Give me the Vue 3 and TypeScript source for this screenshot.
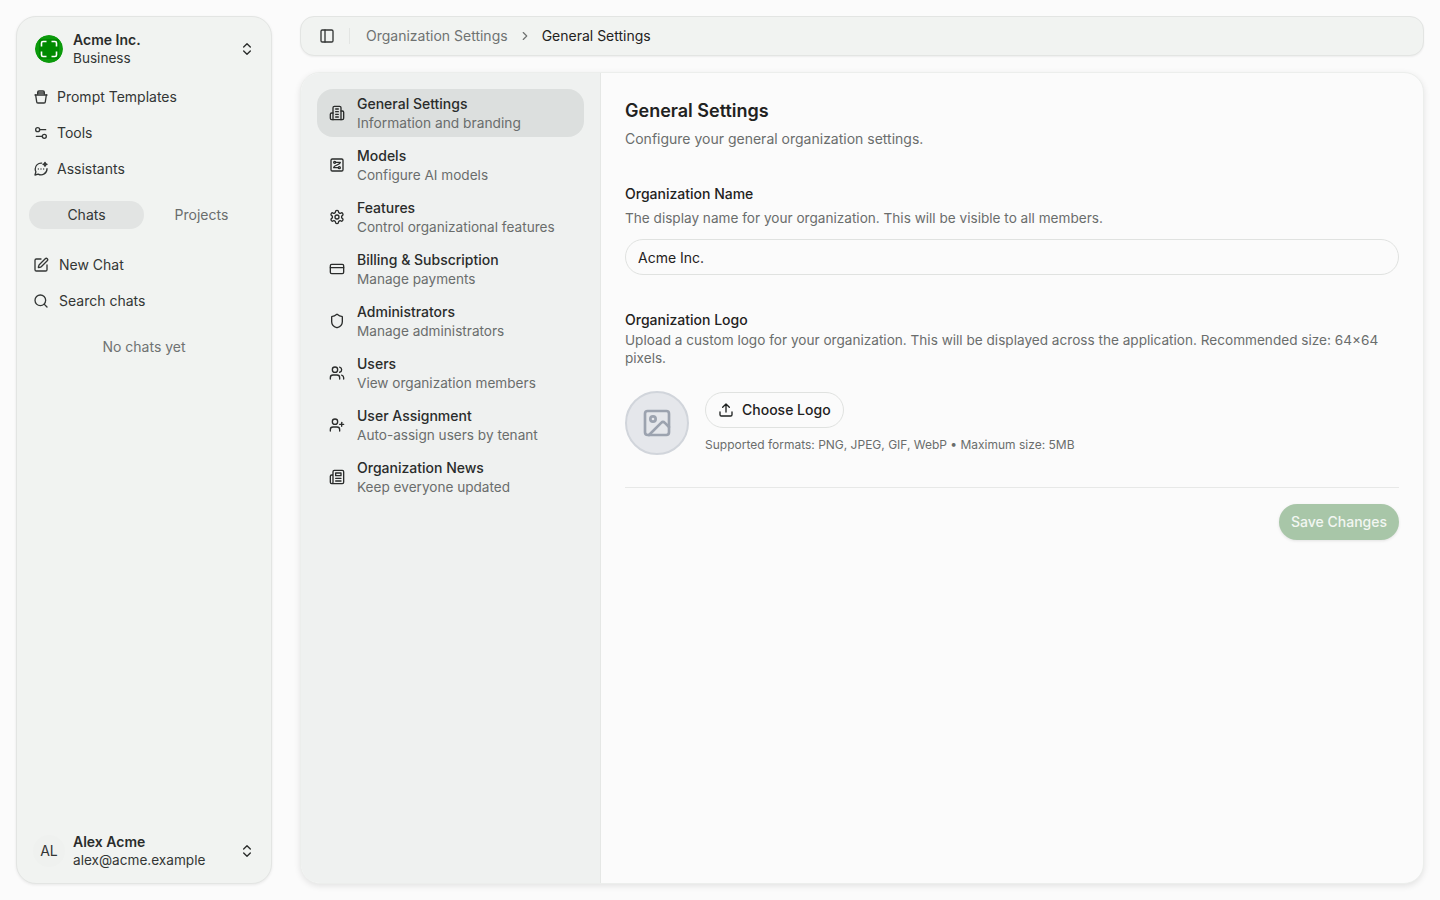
<script setup lang="ts">
const topLinks = [
  { label: 'Prompt Templates', icon: 'bowl' },
  { label: 'Tools', icon: 'sliders' },
  { label: 'Assistants', icon: 'spark' },
]

const chatLinks = [
  { label: 'New Chat', icon: 'edit' },
  { label: 'Search chats', icon: 'search' },
]

const settingsNav = [
  { title: 'General Settings', sub: 'Information and branding', icon: 'building', active: true },
  { title: 'Models', sub: 'Configure AI models', icon: 'models' },
  { title: 'Features', sub: 'Control organizational features', icon: 'gear' },
  { title: 'Billing & Subscription', sub: 'Manage payments', icon: 'card' },
  { title: 'Administrators', sub: 'Manage administrators', icon: 'shield' },
  { title: 'Users', sub: 'View organization members', icon: 'users' },
  { title: 'User Assignment', sub: 'Auto-assign users by tenant', icon: 'userPlus' },
  { title: 'Organization News', sub: 'Keep everyone updated', icon: 'news' },
]

// stroke paths, 24x24 viewBox
const icons: Record<string, string[]> = {
  bowl: [
    'M7 8V5a2 2 0 0 1 2-2h6a2 2 0 0 1 2 2v3',
    'M7 6h10',
    'M3 9h18',
    'M4 9l1.5 10a2 2 0 0 0 2 2h9a2 2 0 0 0 2-2L20 9',
  ],
  sliders: [
    'M14 17H5',
    'M19 7h-9',
    'M10 7a3 3 0 1 1-6 0 3 3 0 0 1 6 0',
    'M20 17a3 3 0 1 1-6 0 3 3 0 0 1 6 0',
  ],
  spark: [
    'M13 3.1A9 9 0 0 0 3.3 12c0 1.5.4 3 1 4.2L3 21l4.8-1.3A9 9 0 0 0 21 11.5',
    'M18 2l.9 2.1L21 5l-2.1.9L18 8l-.9-2.1L15 5l2.1-.9z',
    'M8 12h.01',
    'M12 12h.01',
    'M16 12h.01',
  ],
  edit: [
    'M12 3H5a2 2 0 0 0-2 2v14a2 2 0 0 0 2 2h14a2 2 0 0 0 2-2v-7',
    'M18.375 2.625a1 1 0 0 1 3 3l-9.013 9.014a2 2 0 0 1-.853.505l-2.873.84a.5.5 0 0 1-.62-.62l.84-2.873a2 2 0 0 1 .506-.852z',
  ],
  search: ['M19 11a8 8 0 1 1-16 0 8 8 0 0 1 16 0', 'M21 21l-4.3-4.3'],
  building: [
    'M6 22V4a2 2 0 0 1 2-2h8a2 2 0 0 1 2 2v18Z',
    'M6 12H4a2 2 0 0 0-2 2v6a2 2 0 0 0 2 2h2',
    'M18 9h2a2 2 0 0 1 2 2v9a2 2 0 0 1-2 2h-2',
    'M10 6h4',
    'M10 10h4',
    'M10 14h4',
    'M10 18h4',
  ],
  models: [
    'M5 3h14a2 2 0 0 1 2 2v14a2 2 0 0 1-2 2H5a2 2 0 0 1-2-2V5a2 2 0 0 1 2-2z',
    'M10 8a1.5 1.5 0 1 1-3 0 1.5 1.5 0 0 1 3 0',
    'M17 16a1.5 1.5 0 1 1-3 0 1.5 1.5 0 0 1 3 0',
    'M10 8h7c0 4-10 4-10 8h7',
  ],
  gear: [
    'M12.22 2h-.44a2 2 0 0 0-2 2v.18a2 2 0 0 1-1 1.73l-.43.25a2 2 0 0 1-2 0l-.15-.08a2 2 0 0 0-2.73.73l-.22.38a2 2 0 0 0 .73 2.73l.15.1a2 2 0 0 1 1 1.72v.51a2 2 0 0 1-1 1.74l-.15.09a2 2 0 0 0-.73 2.73l.22.38a2 2 0 0 0 2.73.73l.15-.08a2 2 0 0 1 2 0l.43.25a2 2 0 0 1 1 1.73V20a2 2 0 0 0 2 2h.44a2 2 0 0 0 2-2v-.18a2 2 0 0 1 1-1.73l.43-.25a2 2 0 0 1 2 0l.15.08a2 2 0 0 0 2.73-.73l.22-.39a2 2 0 0 0-.73-2.73l-.15-.08a2 2 0 0 1-1-1.74v-.5a2 2 0 0 1 1-1.74l.15-.09a2 2 0 0 0 .73-2.73l-.22-.38a2 2 0 0 0-2.73-.73l-.15.08a2 2 0 0 1-2 0l-.43-.25a2 2 0 0 1-1-1.73V4a2 2 0 0 0-2-2z',
    'M15 12a3 3 0 1 1-6 0 3 3 0 0 1 6 0',
  ],
  card: [
    'M4 5h16a2 2 0 0 1 2 2v10a2 2 0 0 1-2 2H4a2 2 0 0 1-2-2V7a2 2 0 0 1 2-2z',
    'M2 10h20',
  ],
  shield: [
    'M20 13c0 5-3.5 7.5-7.66 8.95a1 1 0 0 1-.67-.01C7.5 20.5 4 18 4 13V6a1 1 0 0 1 1-1c2 0 4.5-1.2 6.24-2.72a1.17 1.17 0 0 1 1.52 0C14.51 3.81 17 5 19 5a1 1 0 0 1 1 1z',
  ],
  users: [
    'M16 21v-2a4 4 0 0 0-4-4H6a4 4 0 0 0-4 4v2',
    'M13 7a4 4 0 1 1-8 0 4 4 0 0 1 8 0',
    'M22 21v-2a4 4 0 0 0-3-3.87',
    'M16 3.13a4 4 0 0 1 0 7.75',
  ],
  userPlus: [
    'M16 21v-2a4 4 0 0 0-4-4H6a4 4 0 0 0-4 4v2',
    'M13 7a4 4 0 1 1-8 0 4 4 0 0 1 8 0',
    'M19 8v6',
    'M22 11h-6',
  ],
  news: [
    'M4 22h16a2 2 0 0 0 2-2V4a2 2 0 0 0-2-2H8a2 2 0 0 0-2 2v16a2 2 0 0 1-4 0v-9a2 2 0 0 1 2-2h2',
    'M10 6h8v4h-8z',
    'M10 14h8',
    'M10 18h8',
  ],
}
</script>

<template>
  <div class="page">
    <aside class="sidebar">
      <div class="org">
        <svg class="org-logo" viewBox="0 0 28 28" width="28" height="28" fill="none">
          <circle cx="14" cy="14" r="14" fill="#0b9a0b" />
          <rect x="4" y="4" width="20" height="20" rx="2" fill="#008a00" />
          <path d="M6.5 11.5V8a1.5 1.5 0 0 1 1.5-1.5h3.5M16.5 6.5H20A1.5 1.5 0 0 1 21.5 8v3.5M21.5 16.5V20a1.5 1.5 0 0 1-1.5 1.5h-3.5M11.5 21.5H8A1.5 1.5 0 0 1 6.5 20v-3.5" stroke="#fff" stroke-width="1.6" />
        </svg>
        <div class="two-line">
          <strong>Acme Inc.</strong>
          <span>Business</span>
        </div>
        <svg class="updown" viewBox="0 0 24 24" width="16" height="16" fill="none" stroke="currentColor" stroke-width="2" stroke-linecap="round" stroke-linejoin="round">
          <path d="m7 15 5 5 5-5M7 9l5-5 5 5" />
        </svg>
      </div>

      <nav class="links">
        <a v-for="link in topLinks" :key="link.label" class="link">
          <svg viewBox="0 0 24 24" width="16" height="16" fill="none" stroke="currentColor" stroke-width="2" stroke-linecap="round" stroke-linejoin="round">
            <path v-for="d in icons[link.icon]" :key="d" :d="d" />
          </svg>
          {{ link.label }}
        </a>
      </nav>

      <div class="tabs">
        <span class="tab tab-on">Chats</span>
        <span class="tab">Projects</span>
      </div>

      <nav class="links chat-links">
        <a v-for="link in chatLinks" :key="link.label" class="link">
          <svg viewBox="0 0 24 24" width="16" height="16" fill="none" stroke="currentColor" stroke-width="2" stroke-linecap="round" stroke-linejoin="round">
            <path v-for="d in icons[link.icon]" :key="d" :d="d" />
          </svg>
          {{ link.label }}
        </a>
      </nav>

      <p class="empty">No chats yet</p>

      <div class="account">
        <span class="initials">AL</span>
        <div class="two-line">
          <strong>Alex Acme</strong>
          <span>alex@acme.example</span>
        </div>
        <svg class="updown" viewBox="0 0 24 24" width="16" height="16" fill="none" stroke="currentColor" stroke-width="2" stroke-linecap="round" stroke-linejoin="round">
          <path d="m7 15 5 5 5-5M7 9l5-5 5 5" />
        </svg>
      </div>
    </aside>

    <div class="main">
      <header class="topbar">
        <svg viewBox="0 0 24 24" width="16" height="16" fill="none" stroke="currentColor" stroke-width="2" stroke-linecap="round" stroke-linejoin="round">
          <rect x="3" y="3" width="18" height="18" rx="2" />
          <path d="M9 3v18" />
        </svg>
        <span class="sep"></span>
        <span class="crumb">Organization Settings</span>
        <svg class="crumb-arrow" viewBox="0 0 24 24" width="14" height="14" fill="none" stroke="currentColor" stroke-width="2" stroke-linecap="round" stroke-linejoin="round">
          <path d="m9 18 6-6-6-6" />
        </svg>
        <span class="crumb-now">General Settings</span>
      </header>

      <div class="panel">
        <nav class="settings-nav">
          <a v-for="item in settingsNav" :key="item.title" class="nav-item" :class="{ active: item.active }">
            <svg viewBox="0 0 24 24" width="16" height="16" fill="none" stroke="currentColor" stroke-width="2" stroke-linecap="round" stroke-linejoin="round">
              <path v-for="d in icons[item.icon]" :key="d" :d="d" />
            </svg>
            <div class="nav-text">
              <span class="nav-title">{{ item.title }}</span>
              <span class="nav-sub">{{ item.sub }}</span>
            </div>
          </a>
        </nav>

        <section class="content">
          <h1>General Settings</h1>
          <p class="lead">Configure your general organization settings.</p>

          <h2 class="name-label">Organization Name</h2>
          <p class="hint">The display name for your organization. This will be visible to all members.</p>
          <input class="field" value="Acme Inc." />

          <h2 class="logo-label">Organization Logo</h2>
          <p class="hint logo-hint">
            Upload a custom logo for your organization. This will be displayed across the application. Recommended size: 64×64 pixels.
          </p>

          <div class="logo-row">
            <span class="logo-box">
              <svg viewBox="0 0 24 24" width="32" height="32" fill="none" stroke="#9ca3af" stroke-width="2" stroke-linecap="round" stroke-linejoin="round">
                <rect x="3" y="3" width="18" height="18" rx="2" />
                <circle cx="9" cy="9" r="2" />
                <path d="m21 15-3.09-3.09a2 2 0 0 0-2.82 0L6 21" />
              </svg>
            </span>
            <div>
              <button class="choose">
                <svg viewBox="0 0 24 24" width="16" height="16" fill="none" stroke="currentColor" stroke-width="2" stroke-linecap="round" stroke-linejoin="round">
                  <path d="M12 3v12M17 8l-5-5-5 5M21 15v4a2 2 0 0 1-2 2H5a2 2 0 0 1-2-2v-4" />
                </svg>
                Choose Logo
              </button>
              <p class="formats">Supported formats: PNG, JPEG, GIF, WebP • Maximum size: 5MB</p>
            </div>
          </div>

          <div class="actions">
            <button class="save">Save Changes</button>
          </div>
        </section>
      </div>
    </div>
  </div>
</template>

<style>
html,
body {
  background: #fbfbfb;
}
</style>

<style scoped>
.page {
  display: flex;
  gap: 28px;
  height: 900px;
  box-sizing: border-box;
  padding: 16px;
  font-family: Inter, 'Noto Sans', sans-serif;
  font-size: 14px;
  line-height: 20px;
  color: #1f2221;
  background: #fbfbfb;
}

.sidebar {
  width: 256px;
  flex: none;
  box-sizing: border-box;
  display: flex;
  flex-direction: column;
  padding: 14px 12px 14px;
  background: #f1f3f1;
  border: 1px solid #e3e5e3;
  border-radius: 20px;
  box-shadow: 0 1px 3px rgba(0, 0, 0, 0.08);
}

.org,
.account {
  display: flex;
  align-items: center;
  gap: 10px;
  height: 36px;
  padding: 0 0 0 6px;
}

.org-logo {
  flex: none;
  border-radius: 50%;
}

.two-line {
  flex: 1;
  display: flex;
  flex-direction: column;
  line-height: 18px;
  color: #333635;
  font-size: 13.6px;
}

.two-line strong {
  font-size: 14px;
  font-weight: 600;
  color: #2a2c2b;
}

.updown {
  flex: none;
  margin-right: 4px;
  color: #2a2c2b;
}

.links {
  display: flex;
  flex-direction: column;
  margin-top: 12px;
}

.link {
  display: flex;
  align-items: center;
  gap: 8px;
  height: 36px;
  padding: 0 4px;
  color: #333635;
}

.tabs {
  display: flex;
  margin-top: 14px;
}

.tab {
  flex: 1;
  height: 28px;
  display: flex;
  align-items: center;
  justify-content: center;
  border-radius: 14px;
  color: #6a6d6c;
}

.tab-on {
  background: #e2e4e3;
  color: #333635;
}

.chat-links {
  margin-top: 18px;
}

.chat-links .link {
  gap: 10px;
}

.empty {
  margin: 18px 0 0;
  text-align: center;
  color: #6f7271;
}

.account {
  margin-top: auto;
}

.initials {
  width: 32px;
  height: 32px;
  flex: none;
  margin: 0 -2px;
  display: flex;
  align-items: center;
  justify-content: center;
  border-radius: 50%;
  background: #eff1ef;
  color: #333635;
}

.main {
  flex: 1;
  min-width: 0;
  display: flex;
  flex-direction: column;
  gap: 16px;
}

.topbar {
  height: 40px;
  box-sizing: border-box;
  flex: none;
  display: flex;
  align-items: center;
  padding: 0 18px;
  background: #f1f3f1;
  border: 1px solid #e3e5e3;
  border-radius: 14px;
  box-shadow: 0 1px 2px rgba(0, 0, 0, 0.06);
  color: #333635;
}

.sep {
  width: 1px;
  height: 16px;
  margin: 0 16px 0 14px;
  background: #e3e5e3;
}

.crumb {
  color: #6f7271;
}

.crumb-arrow {
  margin: 0 10px 0 10px;
  color: #6f7271;
}

.crumb-now {
  color: #1f2221;
}

.panel {
  flex: 1;
  min-height: 0;
  display: flex;
  background: #fbfbfb;
  border: 1px solid #eceeec;
  border-radius: 20px;
  overflow: hidden;
  box-shadow: 0 2px 6px rgba(0, 0, 0, 0.1);
}

.settings-nav {
  width: 300px;
  flex: none;
  box-sizing: border-box;
  display: flex;
  flex-direction: column;
  gap: 4px;
  padding: 16px;
  background: #eff1f0;
  border-right: 1px solid #e5e7e5;
}

.nav-item {
  height: 48px;
  flex: none;
  display: flex;
  align-items: center;
  gap: 12px;
  padding: 0 12px;
  border-radius: 16px;
  color: #2a2c2b;
}

.nav-item.active {
  background: #dcdfde;
}

.nav-text {
  display: flex;
  flex-direction: column;
  line-height: 19px;
}

.nav-title {
  font-weight: 500;
}

.nav-sub {
  margin: 1px 0 -1px;
  font-size: 13.6px;
  color: #6a6d6c;
}

.active .nav-sub {
  font-size: 13.76px;
}

.content {
  flex: 1;
  min-width: 0;
  padding: 24px;
}

h1 {
  margin: 2px 0 0;
  font-size: 18px;
  line-height: 24px;
  font-weight: 600;
  color: #1f2221;
}

.lead {
  margin: 6px 0 0;
  color: #6a6d6c;
}

h2 {
  margin: 0;
  font-size: 14px;
  line-height: 20px;
  font-weight: 500;
  color: #1f2221;
}

.name-label {
  margin-top: 35px;
}

.hint {
  margin: 4px 0 0;
  font-size: 13.6px;
  color: #6a6d6c;
}

.field {
  display: block;
  width: 100%;
  height: 36px;
  box-sizing: border-box;
  margin-top: 11px;
  padding: 0 12px;
  font: inherit;
  color: #1f2221;
  background: #fbfbfb;
  border: 1px solid #e0e2e0;
  border-radius: 18px;
  outline: none;
}

.logo-label {
  margin-top: 35px;
}

.logo-hint {
  margin-top: 1px;
  line-height: 18px;
}

.logo-row {
  display: flex;
  gap: 16px;
  margin-top: 24px;
}

.logo-box {
  width: 64px;
  height: 64px;
  flex: none;
  box-sizing: border-box;
  display: flex;
  align-items: center;
  justify-content: center;
  border: 2px solid #d1d5db;
  border-radius: 50%;
  background: #e5e7eb;
}

.choose {
  display: flex;
  align-items: center;
  gap: 8px;
  height: 36px;
  margin-top: 1px;
  padding: 0 12px;
  font: inherit;
  font-weight: 500;
  color: #1f2221;
  background: #fbfbfb;
  border: 1px solid #e0e2e0;
  border-radius: 18px;
}

.formats {
  margin: 9px 0 0;
  font-size: 12px;
  line-height: 16px;
  color: #6a6d6c;
}

.actions {
  display: flex;
  justify-content: flex-end;
  margin-top: 32px;
  padding-top: 16px;
  border-top: 1px solid #e7e8e7;
}

.save {
  height: 36px;
  padding: 0 12px;
  font: inherit;
  font-weight: 500;
  color: #f2f6f2;
  background: #a8c6a8;
  border: none;
  border-radius: 18px;
  box-shadow: 0 1px 3px rgba(0, 0, 0, 0.1);
}
</style>
